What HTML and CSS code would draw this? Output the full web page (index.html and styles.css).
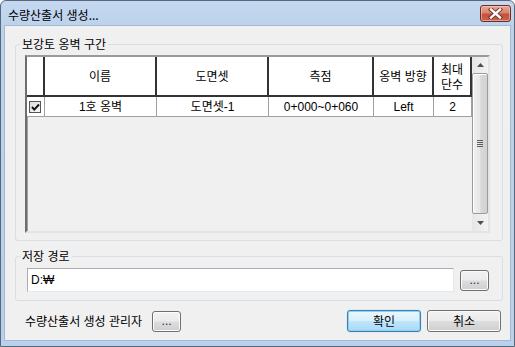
FILE: index.html
```html
<!DOCTYPE html>
<html lang="ko">
<head>
<meta charset="utf-8">
<title>수량산출서 생성...</title>
<link rel="stylesheet" href="styles.css">
</head>
<body>
<div class="window">
  <div class="titlebar">
    <span class="title">수량산출서 생성...</span>
    <div class="close">
      <svg width="15" height="11" viewBox="0 0 15 11">
        <path d="M3 1.5 L12 9.5 M12 1.5 L3 9.5" stroke="#6a3028" stroke-width="4.2" stroke-linecap="square"/>
        <path d="M3 1.5 L12 9.5 M12 1.5 L3 9.5" stroke="#ffffff" stroke-width="2.4" stroke-linecap="square"/>
      </svg>
    </div>
  </div>
  <div class="client">
    <fieldset class="group group-grid">
      <legend>보강토 옹벽 구간</legend>
      <div class="grid">
        <div class="table">
          <div class="hcell"></div>
          <div class="hcell">이름</div>
          <div class="hcell">도면셋</div>
          <div class="hcell">측점</div>
          <div class="hcell">옹벽 방향</div>
          <div class="hcell two">최대<br>단수</div>
          <div class="dcell check">
            <span class="checkbox">
              <svg width="9" height="9" viewBox="0 0 9 9"><path d="M1 4 L3.3 6.6 L8 1.5" stroke="#111" stroke-width="2" fill="none"/></svg>
            </span>
          </div>
          <div class="dcell">1호 옹벽</div>
          <div class="dcell">도면셋-1</div>
          <div class="dcell">0+000~0+060</div>
          <div class="dcell">Left</div>
          <div class="dcell">2</div>
        </div>
        <div class="scrollbar">
          <div class="arrow"><svg width="7" height="4" viewBox="0 0 7 4"><path d="M0 4 L3.5 0 L7 4 Z" fill="#505050"/></svg></div>
          <div class="thumb"><span class="grip"></span><span class="grip"></span><span class="grip"></span><span class="grip"></span></div>
          <div class="arrow"><svg width="7" height="4" viewBox="0 0 7 4"><path d="M0 0 L7 0 L3.5 4 Z" fill="#505050"/></svg></div>
        </div>
      </div>
    </fieldset>
    <fieldset class="group group-path">
      <legend>저장 경로</legend>
      <div class="path-row">
        <div class="textbox">D:₩</div>
        <button class="btn small">...</button>
      </div>
    </fieldset>
    <div class="footer">
      <span class="manager">수량산출서 생성 관리자</span>
      <button class="btn small">...</button>
      <span class="spacer"></span>
      <button class="btn wide default">확인</button>
      <button class="btn wide">취소</button>
    </div>
  </div>
</div>
</body>
</html>
```

FILE: styles.css
```css
html, body {
  margin: 0;
  padding: 0;
  background: #ffffff;
}

body {
  font-family: "Liberation Sans", "Noto Sans CJK KR", sans-serif;
  font-size: 12px;
  color: #000;
}

.window {
  width: 515px;
  height: 347px;
  box-sizing: border-box;
  border: 1px solid #56687e;
  border-radius: 6px 6px 0 0;
  background: linear-gradient(to bottom, #c5d8f0 0px, #bcd2ec 25px, #b9d1ea 100%);
  padding: 0 3px 5px 3px;
  display: flex;
  flex-direction: column;
}

.titlebar {
  height: 24px;
  display: flex;
  align-items: flex-start;
  justify-content: space-between;
  padding-left: 4px;
}

.title {
  font-family: "Noto Sans CJK KR", sans-serif;
  font-size: 12px;
  line-height: 14px;
  margin-top: 7px;
  color: #000;
}

.close {
  width: 31px;
  height: 17px;
  box-sizing: border-box;
  margin-top: 4px;
  border: 1px solid #6e2c24;
  border-radius: 3px;
  background: linear-gradient(to bottom, #e7a695 0%, #d98471 45%, #c6503d 55%, #c8644a 100%);
  box-shadow: inset 0 0 0 1px rgba(255, 220, 210, 0.5);
  display: flex;
  align-items: center;
  justify-content: center;
}

.close svg {
  display: block;
}

.client {
  flex: 1;
  border: 1px solid #a5b9d2;
  background: #f0f0f0;
  display: flex;
  flex-direction: column;
}

.group {
  border: 1px solid #d5dfe5;
  border-radius: 3px;
  margin: 0 7px 0 10px;
  min-width: 0;
}

.group legend {
  font-family: "Noto Sans CJK KR", sans-serif;
  font-size: 12px;
  line-height: 14px;
  padding: 0 2px;
  margin-left: -5px;
}

.group-grid {
  margin-top: 11px;
  padding: 4px 12px 7px 9px;
}

.group-path {
  margin-top: 8px;
  padding: 5px 13px 8px 11px;
}

.group-path legend {
  margin-left: -7px;
}

/* grid */
.grid {
  height: 178px;
  box-sizing: border-box;
  display: flex;
  border-style: solid;
  border-width: 2px;
  border-color: #9a9a9a #e3e3e3 #e3e3e3 #6e6e6e;
  box-shadow: inset 1px 1px 0 #a0a0a0;
  background: #f0f0f0;
}

.table {
  width: 445px;
  flex: none;
  display: grid;
  grid-template-columns: 18px 112px 112px 105px 60px 38px;
  grid-template-rows: 40px 20px;
  align-content: start;
}

.hcell {
  box-sizing: border-box;
  background: #ffffff;
  border-right: 2px solid #333333;
  border-bottom: 2px solid #333333;
  display: flex;
  align-items: center;
  justify-content: center;
  text-align: center;
  font-family: "Noto Sans CJK KR", sans-serif;
  font-size: 12px;
  line-height: 14px;
}

.hcell.two {
  line-height: 15px;
}

.dcell {
  box-sizing: border-box;
  background: #ffffff;
  border-right: 1px solid #a0a0a0;
  border-bottom: 1px solid #a0a0a0;
  display: flex;
  align-items: center;
  justify-content: center;
  font-size: 12px;
  line-height: 14px;
}

.dcell.check {
  justify-content: flex-start;
  padding-left: 2px;
}

.checkbox {
  width: 12px;
  height: 12px;
  box-sizing: border-box;
  border: 1px solid #555555;
  background: linear-gradient(to bottom right, #dcdcdc, #f6f6f6);
  display: flex;
  align-items: center;
  justify-content: center;
  margin-top: 1px;
}

.checkbox svg {
  display: block;
}

/* scrollbar */
.scrollbar {
  width: 16px;
  flex: none;
  display: flex;
  flex-direction: column;
  background: linear-gradient(to right, #e6e6e6, #f2f2f2);
}

.arrow {
  height: 16px;
  flex: none;
  display: flex;
  align-items: center;
  justify-content: center;
}

.arrow svg {
  display: block;
}

.thumb {
  flex: 1;
  margin: 0 0 1px 0;
  border: 1px solid #9b9b9b;
  border-radius: 2px;
  background: linear-gradient(to right, #f1f1f1 0%, #e6e6e6 50%, #d8d8d8 55%, #d2d2d2 100%);
  box-shadow: inset 1px 1px 0 #ffffff;
  display: flex;
  flex-direction: column;
  align-items: center;
  justify-content: center;
  gap: 1px;
}

.grip {
  display: block;
  width: 6px;
  height: 1px;
  background: #5e5e5e;
}

/* path */
.path-row {
  display: flex;
  align-items: center;
  gap: 6px;
}

.textbox {
  flex: 1;
  height: 24px;
  box-sizing: border-box;
  border: 1px solid #abadb3;
  border-color: #abadb3 #e3e9ef #e3e9ef #abadb3;
  background: #ffffff;
  padding: 0 3px;
  display: flex;
  align-items: center;
  font-size: 12px;
  line-height: 14px;
}

/* buttons */
.btn {
  font-family: "Liberation Sans", "Noto Sans CJK KR", sans-serif;
  font-size: 12px;
  line-height: 14px;
  color: #000;
  height: 21px;
  box-sizing: border-box;
  padding: 0;
  border: 1px solid #707070;
  border-radius: 3px;
  background: linear-gradient(to bottom, #f2f2f2 0%, #ebebeb 48%, #dddddd 52%, #cfcfcf 100%);
  box-shadow: inset 0 0 0 1px #fbfbfb;
}

.btn.small {
  width: 29px;
  color: #1a1a60;
}

.btn.wide {
  width: 74px;
  height: 22px;
  font-family: "Noto Sans CJK KR", sans-serif;
}

.btn.default {
  border-color: #3c7fb1;
  background: linear-gradient(to bottom, #eaf6fd 0%, #d9f0fc 48%, #bee6fd 52%, #a7d9f5 100%);
  box-shadow: inset 0 0 0 1px #8ed0f0, 0 0 1px #6fbbe8;
}

.footer {
  display: flex;
  align-items: center;
  margin-top: 9px;
  padding: 0 9px 0 20px;
  gap: 6px;
}

.manager {
  font-family: "Noto Sans CJK KR", sans-serif;
  font-size: 12px;
  line-height: 14px;
  margin-right: 4px;
}

.spacer {
  flex: 1;
}
```
